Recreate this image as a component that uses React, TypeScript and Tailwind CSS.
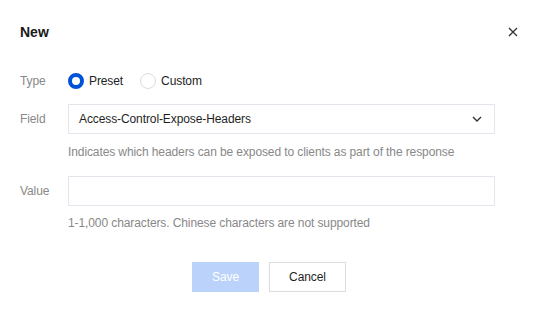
const font = { fontFamily: '"Liberation Sans", Arial, sans-serif' };

const Radio = ({ checked, label }: { checked: boolean; label: string }) => (
  <label className="flex items-center gap-[5px] cursor-pointer">
    {checked ? (
      <span className="w-[16px] h-[16px] rounded-full border-[4px] border-[#0052d9] bg-white box-border" />
    ) : (
      <span className="w-[16px] h-[16px] rounded-full border border-[#dcdcdc] bg-white box-border" />
    )}
    <span className="text-[12px] text-[#222]">{label}</span>
  </label>
);

export default function App() {
  return (
    <div className="w-[542px] h-[313px] bg-white text-[12px] tracking-[-0.1px]" style={font}>
      <div className="flex items-center justify-between pl-[20px] pr-[24px] pt-[22px] h-[42px]">
        <h2 className="text-[14px] font-bold text-[#1a1a1a] leading-[20px] tracking-normal">New</h2>
        <svg width="10" height="10" viewBox="0 0 10 10" className="text-[#333]">
          <path d="M1 1 L9 9 M9 1 L1 9" stroke="currentColor" strokeWidth="1.3" />
        </svg>
      </div>

      <div className="pl-[20px] pr-[47px] pt-[24px]">
        <div className="flex items-center h-[30px]">
          <div className="w-[48px] text-[#888]">Type</div>
          <div className="flex items-center gap-[17px]">
            <Radio checked label="Preset" />
            <Radio checked={false} label="Custom" />
          </div>
        </div>

        <div className="flex mt-[8px]">
          <div className="w-[48px] h-[30px] flex items-center text-[#888]">Field</div>
          <div className="flex-1">
            <div className="h-[30px] border border-[#e3e5ec] flex items-center justify-between pl-[10px] pr-[12px]">
              <span className="text-[#1f1f1f]">Access-Control-Expose-Headers</span>
              <svg width="10" height="6" viewBox="0 0 10 6" className="text-[#333]">
                <path d="M1 1 L5 5 L9 1" fill="none" stroke="currentColor" strokeWidth="1.4" />
              </svg>
            </div>
            <p className="mt-[10px] leading-[16px] text-[#888]">
              Indicates which headers can be exposed to clients as part of the response
            </p>
          </div>
        </div>

        <div className="flex mt-[16px]">
          <div className="w-[48px] h-[30px] flex items-center text-[#888]">Value</div>
          <div className="flex-1">
            <input className="w-full h-[30px] border border-[#e3e5ec] outline-none px-[10px]" />
            <p className="mt-[9px] leading-[16px] text-[#888]">
              1-1,000 characters. Chinese characters are not supported
            </p>
          </div>
        </div>
      </div>

      <div className="flex justify-center gap-[10px] mt-[31px] pr-[4px]">
        <button className="w-[67px] h-[30px] bg-[#bbd3fb] text-white">Save</button>
        <button className="w-[77px] h-[30px] border border-[#dcdcdc] text-[#1f1f1f] bg-white">Cancel</button>
      </div>
    </div>
  );
}
